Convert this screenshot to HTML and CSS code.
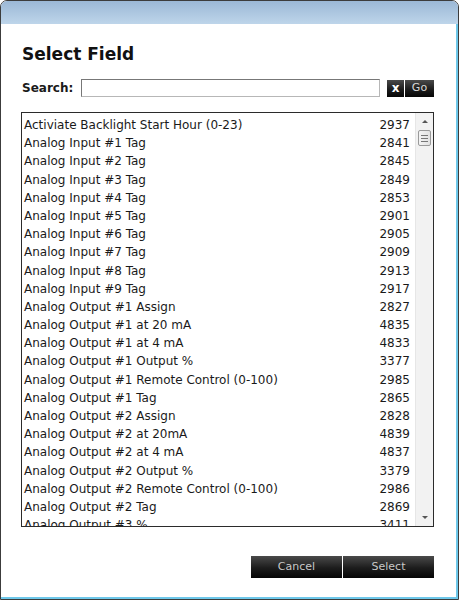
FILE: index.html
```html
<!DOCTYPE html>
<html>
<head>
<meta charset="utf-8">
<link rel="stylesheet" href="styles.css">
</head>
<body>
<div class="window">
  <div class="titlebar"></div>
  <div class="content">
    <h1 class="title">Select Field</h1>
    <div class="search-row">
      <label class="search-label">Search:</label>
      <input class="search-input" type="text">
      <div class="search-buttons">
        <button class="btn btn-x">x</button>
        <button class="btn btn-go">Go</button>
      </div>
    </div>
    <div class="list">
      <div class="rows">
        <div class="row"><span>Activiate Backlight Start Hour (0-23)</span><span>2937</span></div>
        <div class="row"><span>Analog Input #1 Tag</span><span>2841</span></div>
        <div class="row"><span>Analog Input #2 Tag</span><span>2845</span></div>
        <div class="row"><span>Analog Input #3 Tag</span><span>2849</span></div>
        <div class="row"><span>Analog Input #4 Tag</span><span>2853</span></div>
        <div class="row"><span>Analog Input #5 Tag</span><span>2901</span></div>
        <div class="row"><span>Analog Input #6 Tag</span><span>2905</span></div>
        <div class="row"><span>Analog Input #7 Tag</span><span>2909</span></div>
        <div class="row"><span>Analog Input #8 Tag</span><span>2913</span></div>
        <div class="row"><span>Analog Input #9 Tag</span><span>2917</span></div>
        <div class="row"><span>Analog Output #1 Assign</span><span>2827</span></div>
        <div class="row"><span>Analog Output #1 at 20 mA</span><span>4835</span></div>
        <div class="row"><span>Analog Output #1 at 4 mA</span><span>4833</span></div>
        <div class="row"><span>Analog Output #1 Output %</span><span>3377</span></div>
        <div class="row"><span>Analog Output #1 Remote Control (0-100)</span><span>2985</span></div>
        <div class="row"><span>Analog Output #1 Tag</span><span>2865</span></div>
        <div class="row"><span>Analog Output #2 Assign</span><span>2828</span></div>
        <div class="row"><span>Analog Output #2 at 20mA</span><span>4839</span></div>
        <div class="row"><span>Analog Output #2 at 4 mA</span><span>4837</span></div>
        <div class="row"><span>Analog Output #2 Output %</span><span>3379</span></div>
        <div class="row"><span>Analog Output #2 Remote Control (0-100)</span><span>2986</span></div>
        <div class="row"><span>Analog Output #2 Tag</span><span>2869</span></div>
        <div class="row"><span>Analog Output #3 %</span><span>3411</span></div>
      </div>
      <div class="scrollbar">
        <div class="arrow arrow-up"></div>
        <div class="track">
          <div class="thumb"><span></span><span></span><span></span></div>
        </div>
        <div class="arrow arrow-down"></div>
      </div>
    </div>
    <div class="actions">
      <button class="btn btn-big">Cancel</button>
      <button class="btn btn-big">Select</button>
    </div>
  </div>
</div>
</body>
</html>
```
FILE: styles.css
```css
html, body {
  margin: 0;
  padding: 0;
  background: #ffffff;
}
body {
  font-family: "DejaVu Sans", Verdana, sans-serif;
  color: #1a1a1a;
}
.window {
  width: 459px;
  height: 600px;
  box-sizing: border-box;
  border: 1px solid #3c3c3c;
  border-radius: 7px 7px 0 0;
  overflow: hidden;
  display: flex;
  flex-direction: column;
  background: #ffffff;
}
.titlebar {
  height: 23px;
  flex: none;
  background: linear-gradient(#9bb8d6, #bed5ea);
}
.content {
  flex: 1;
  display: flex;
  flex-direction: column;
  border-right: 2px solid #6ec8ea;
  border-bottom: 2px solid #6ec8ea;
  padding: 0 22px 0 20px;
}
.title {
  margin: 20px 0 0 1px;
  font-size: 17px;
  font-weight: bold;
  line-height: 20px;
  color: #111;
}
.search-row {
  display: flex;
  align-items: center;
  margin-top: 15px;
  height: 18px;
}
.search-label {
  font-size: 12px;
  font-weight: bold;
  width: 59px;
  padding-left: 1px;
}
.search-input {
  width: 300px;
  height: 18px;
  box-sizing: border-box;
  border: 1px solid #b7b7b7;
  border-left-color: #777;
  border-top-color: #777;
  padding: 0;
  margin: 0;
}
.search-buttons {
  display: flex;
  margin-left: 7px;
}
.btn {
  background: linear-gradient(#4a4a4a, #1c1c1c 55%, #050505);
  color: #d9d9d9;
  border: 0;
  margin: 0;
  font-family: "DejaVu Sans", Verdana, sans-serif;
  padding: 0;
}
.btn-x {
  width: 17px;
  height: 17px;
  font-size: 12px;
  font-weight: bold;
  color: #fff;
  line-height: 15px;
}
.btn-go {
  width: 29px;
  height: 17px;
  font-size: 11px;
  margin-left: 1px;
  line-height: 16px;
}
.list {
  margin-top: 15px;
  height: 415px;
  box-sizing: border-box;
  border: 1px solid #2b2b2b;
  display: flex;
}
.rows {
  flex: 1;
  overflow: hidden;
  padding-top: 3px;
}
.row {
  display: flex;
  justify-content: space-between;
  height: 18.2px;
  line-height: 18.2px;
  font-size: 12px;
  padding: 0 5px 0 2px;
  white-space: nowrap;
}
.scrollbar {
  width: 17px;
  background: #f2f2f2;
  display: flex;
  flex-direction: column;
  border-left: 1px solid #e6e6e6;
}
.arrow {
  height: 17px;
  position: relative;
}
.arrow::after {
  content: "";
  position: absolute;
  left: 6px;
  top: 7px;
  border-left: 3px solid transparent;
  border-right: 3px solid transparent;
}
.arrow-up::after {
  border-bottom: 3px solid #555;
}
.arrow-down::after {
  border-top: 3px solid #555;
}
.track {
  flex: 1;
}
.thumb {
  margin: 0 2px 0 2px;
  height: 16px;
  box-sizing: border-box;
  border: 1px solid #9a9a9a;
  border-radius: 2px;
  background: linear-gradient(90deg, #f4f4f4, #e2e2e2);
  display: flex;
  flex-direction: column;
  align-items: center;
  justify-content: center;
  gap: 2px;
}
.thumb span {
  width: 7px;
  height: 1px;
  background: #777;
}
.actions {
  display: flex;
  justify-content: flex-end;
  margin-top: 29px;
  gap: 1px;
}
.btn-big {
  width: 91px;
  height: 22px;
  font-size: 11px;
  color: #c8c8c8;
  line-height: 22px;
}
```
